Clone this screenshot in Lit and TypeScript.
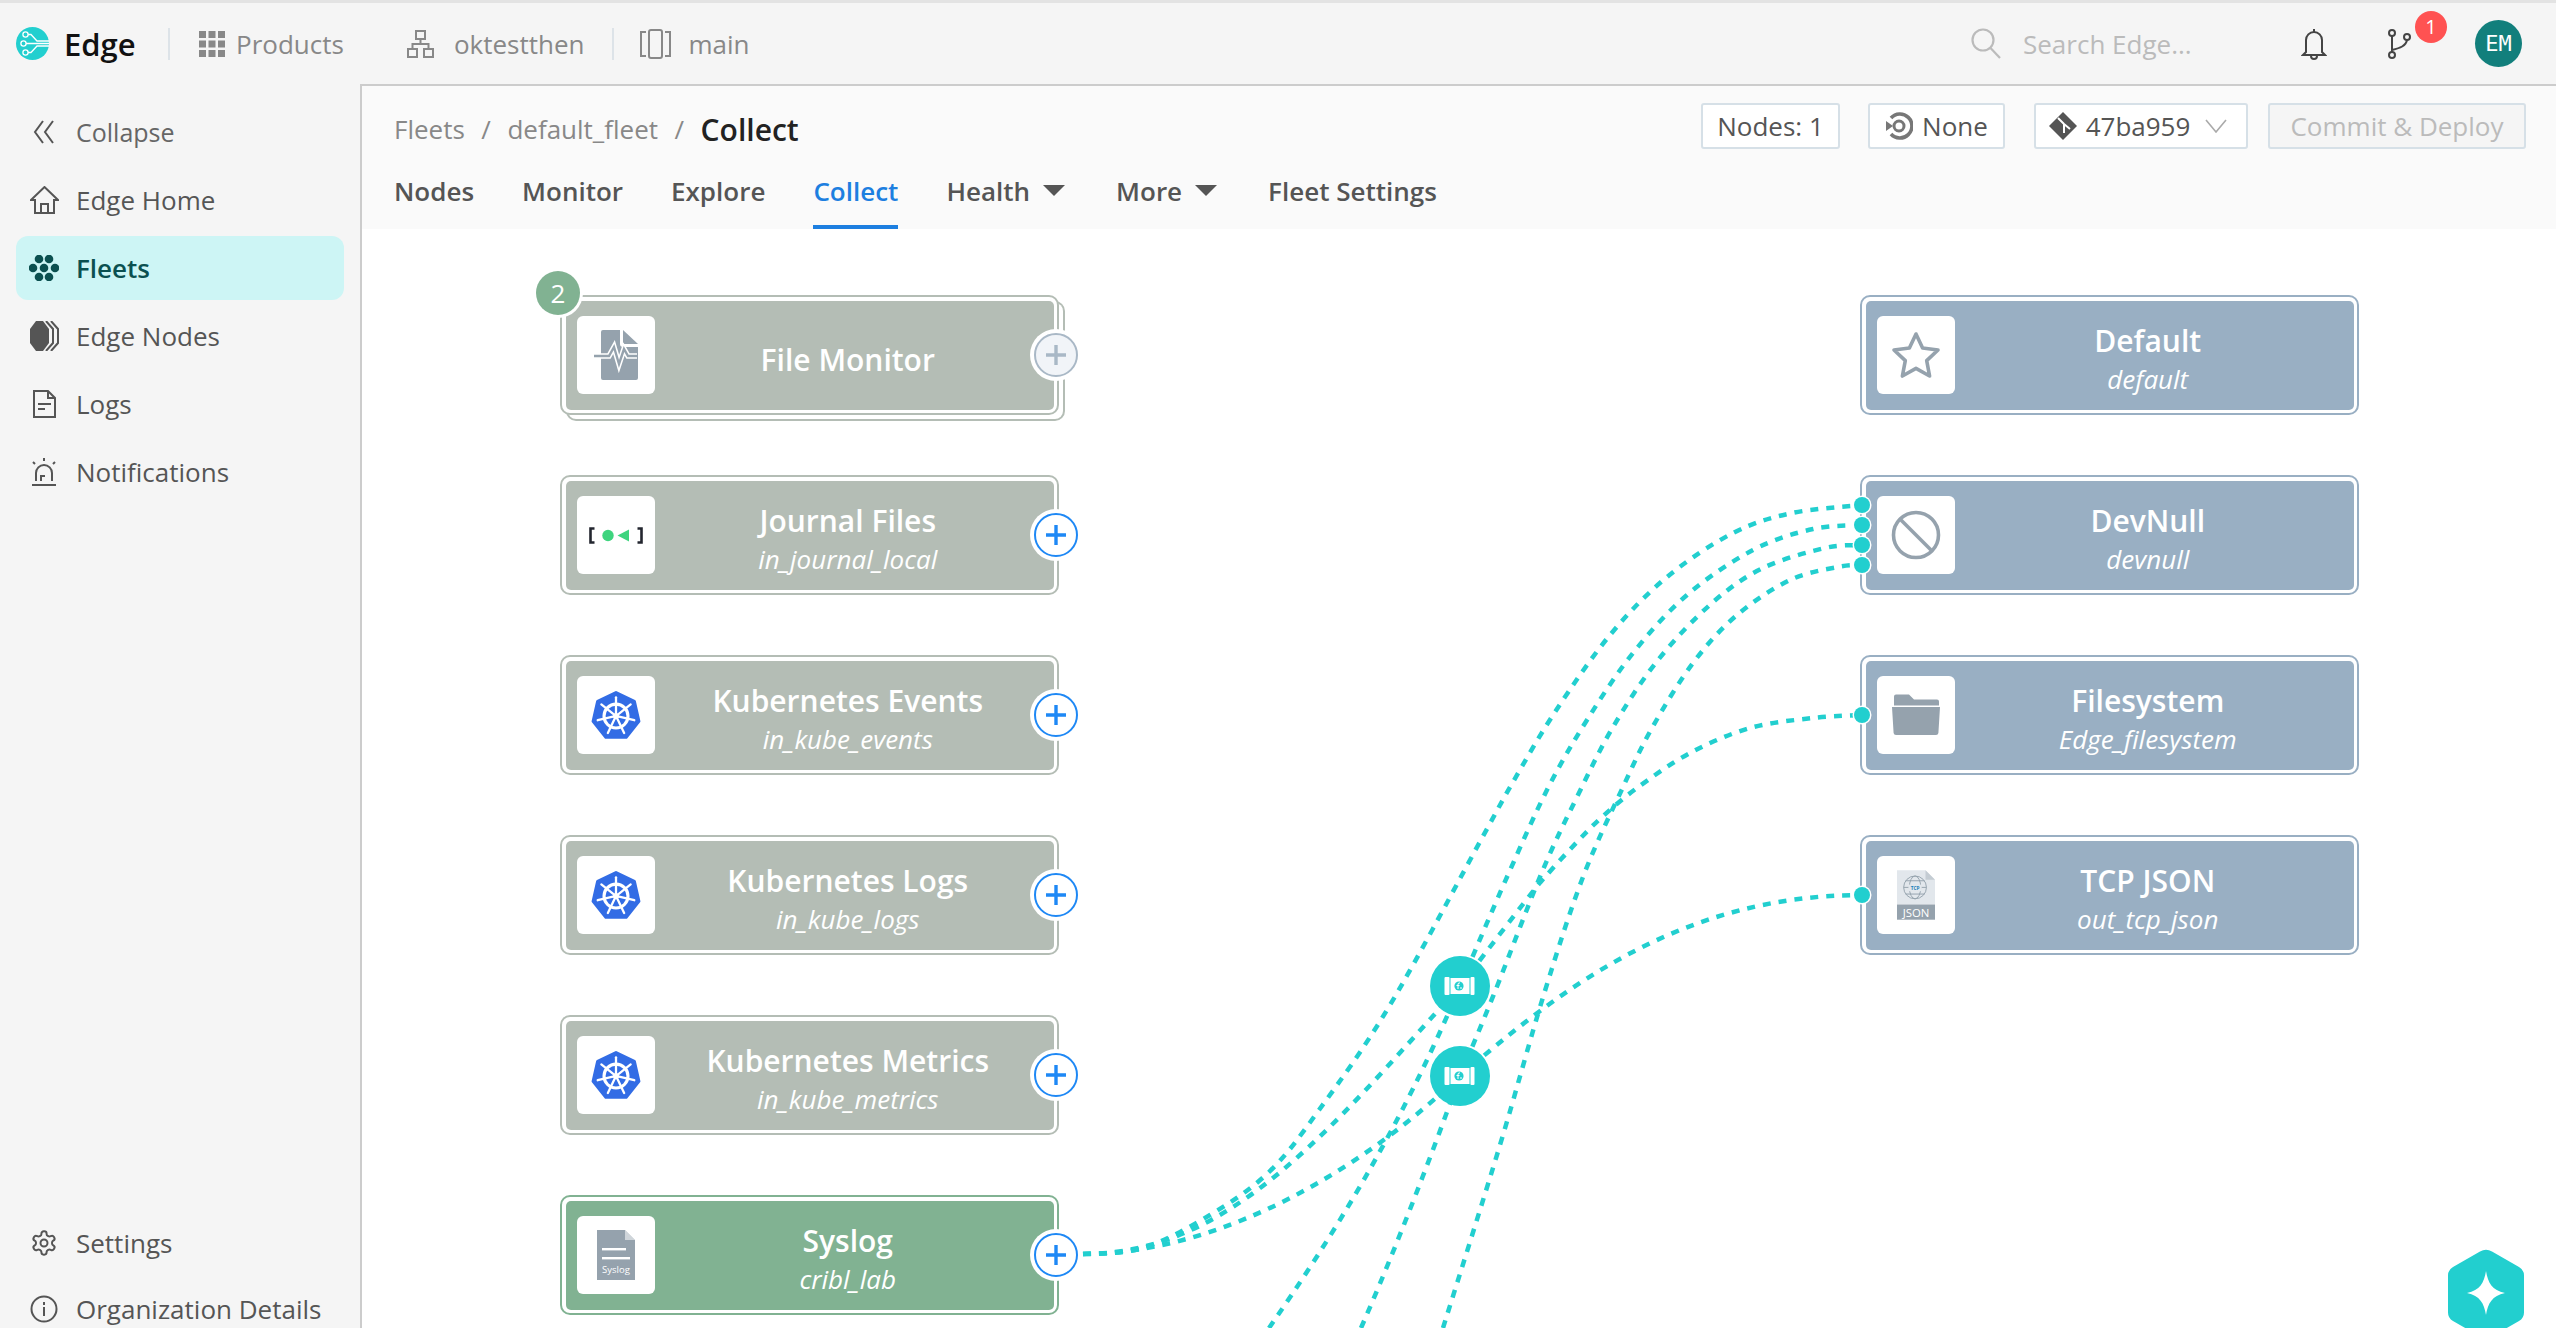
import { LitElement, html, css, svg } from "lit";
import { customElement } from "lit/decorators.js";

const GREY = "#b4bdb5";
const GREEN = "#81b292";
const BLUE = "#99afc3";
const ICON = "#95a2ad";

const heptagon = Array.from({ length: 7 }, (_, i) => {
  const a = -Math.PI / 2 + (i * 2 * Math.PI) / 7;
  return `${(24 + 22.5 * Math.cos(a)).toFixed(2)},${(25 + 22.5 * Math.sin(a)).toFixed(2)}`;
}).join(" ");
const spokes = Array.from({ length: 7 }, (_, i) => {
  const a = -Math.PI / 2 + (i * 2 * Math.PI) / 7;
  const c = Math.cos(a), s = Math.sin(a);
  return svg`<line x1=${24 + 3 * c} y1=${25 + 3 * s} x2=${24 + 18 * c} y2=${25 + 18 * s} stroke="#fff" stroke-width="2.2" stroke-linecap="round"/>`;
});
const kube = html`<svg width="50" height="50" viewBox="0 0 48 48">
  <polygon points=${heptagon} fill="#326ce5" stroke="#326ce5" stroke-width="3" stroke-linejoin="round"/>
  <circle cx="24" cy="25" r="11.5" fill="none" stroke="#fff" stroke-width="3"/>
  ${spokes}<circle cx="24" cy="25" r="3" fill="#fff"/></svg>`;

const fileMonitor = html`<svg width="44" height="50" viewBox="0 0 44 50">
  <path d="M7 2a2 2 0 0 1 2-2h17v14a3 3 0 0 0 3 3h15v31a2 2 0 0 1-2 2H9a2 2 0 0 1-2-2z" fill=${ICON}/>
  <path d="M29 0l15 14H29z" fill=${ICON}/>
  <path d="M0 26h15l5-9 5 17 5-15 4 7h9" fill="none" stroke="#fff" stroke-width="5.5"/>
  <path d="M0 26h15l5-9 5 17 5-15 4 7h9" fill="none" stroke=${ICON} stroke-width="2.4"/></svg>`;

const journal = html`<svg width="54" height="17" viewBox="0 0 54 17">
  <path d="M5.500 1.500H1.500v14h4M48.500 1.500h4v14h-4" fill="none" stroke="#23262f" stroke-width="2.6"/>
  <circle cx="19" cy="8.500" r="5.700" fill="#3ed47e"/><path d="M40 2.500v12L28.500 8.500z" fill="#3ed47e"/></svg>`;

const syslog = html`<svg width="38" height="50" viewBox="0 0 38 50">
  <path d="M0 0h28l10 10v40H0z" fill=${ICON}/><path d="M28 0l10 10H28z" fill="#fff" opacity=".55"/>
  <rect x="5" y="18" width="24" height="2.4" fill="#fff"/><rect x="5" y="27" width="28" height="2.4" fill="#fff"/>
  <text x="19" y="43" text-anchor="middle" font-size="9.500" fill="#fff" font-family="Open Sans, sans-serif">Syslog</text></svg>`;

const star = html`<svg width="50" height="48" viewBox="0 0 50 48">
  <path d="M25 3l6.600 14 15.400 2-11.300 10.600L38.600 45 25 37.400 11.400 45l2.900-15.400L3 19l15.400-2z" fill="none" stroke=${ICON} stroke-width="3.600" stroke-linejoin="round"/></svg>`;
const ban = html`<svg width="50" height="50" viewBox="0 0 50 50">
  <circle cx="25" cy="25" r="22.500" fill="none" stroke=${ICON} stroke-width="3.600"/><path d="M9 9l32 32" stroke=${ICON} stroke-width="3.600"/></svg>`;
const folder = html`<svg width="50" height="42" viewBox="0 0 50 42">
  <path d="M3 2.500a2 2 0 0 1 2-2h13l5 5h23a2 2 0 0 1 2 2v4H3z" fill=${ICON}/>
  <path d="M1 13h48l-1.600 26a2.400 2.400 0 0 1-2.400 2H5a2.400 2.400 0 0 1-2.400-2z" fill=${ICON}/></svg>`;
const tcp = html`<svg width="38" height="50" viewBox="0 0 40 52">
  <path d="M0 0h30l10 10v26H0z" fill="#e2e7ec"/><path d="M30 0l10 10H30z" fill="#c4ccd3"/>
  <g fill="none" stroke=${ICON} stroke-width="1"><circle cx="19" cy="18" r="12"/><ellipse cx="19" cy="18" rx="6" ry="12"/><path d="M7 18h24M9 11h20M9 25h20"/></g>
  <rect x="12" y="15" width="14" height="7" fill="#e2e7ec"/>
  <text x="19" y="21" text-anchor="middle" font-size="5" font-weight="700" fill="#1d7fb8" font-family="Open Sans, sans-serif">TCP</text>
  <rect y="36" width="40" height="16" fill=${ICON}/>
  <text x="20" y="49" text-anchor="middle" font-size="12" fill="#fff" font-family="Open Sans, sans-serif">JSON</text></svg>`;

interface Node { title: string; sub?: string; icon: unknown; x: number; y: number; color: string; out?: boolean; off?: boolean; stack?: boolean; }
const nodes: Node[] = [
  { title: "File Monitor", icon: fileMonitor, x: 560, y: 295, color: GREY, out: true, off: true, stack: true },
  { title: "Journal Files", sub: "in_journal_local", icon: journal, x: 560, y: 475, color: GREY, out: true },
  { title: "Kubernetes Events", sub: "in_kube_events", icon: kube, x: 560, y: 655, color: GREY, out: true },
  { title: "Kubernetes Logs", sub: "in_kube_logs", icon: kube, x: 560, y: 835, color: GREY, out: true },
  { title: "Kubernetes Metrics", sub: "in_kube_metrics", icon: kube, x: 560, y: 1015, color: GREY, out: true },
  { title: "Syslog", sub: "cribl_lab", icon: syslog, x: 560, y: 1195, color: GREEN, out: true },
  { title: "Default", sub: "default", icon: star, x: 1860, y: 295, color: BLUE },
  { title: "DevNull", sub: "devnull", icon: ban, x: 1860, y: 475, color: BLUE },
  { title: "Filesystem", sub: "Edge_filesystem", icon: folder, x: 1860, y: 655, color: BLUE },
  { title: "TCP JSON", sub: "out_tcp_json", icon: tcp, x: 1860, y: 835, color: BLUE },
];

const CX = 362, CY = 229;

function smooth(p: number[][]): string {
  let d = `M${p[0][0]} ${p[0][1]}`;
  for (let i = 0; i < p.length - 1; i++) {
    const a = p[Math.max(i - 1, 0)], b = p[i], c = p[i + 1], e = p[Math.min(i + 2, p.length - 1)];
    d += ` C${b[0] + (c[0] - a[0]) / 6} ${b[1] + (c[1] - a[1]) / 6} ${c[0] - (e[0] - b[0]) / 6} ${c[1] - (e[1] - b[1]) / 6} ${c[0]} ${c[1]}`;
  }
  return d;
}

const edges = [
  smooth([[1083, 1254], [1143, 1248], [1210, 1215], [1269, 1172], [1319, 1110], [1390, 1005], [1482, 838], [1513, 782], [1555, 712], [1610, 635], [1667, 577], [1733, 533], [1792, 513], [1862, 505]]),
  "M1083 1254 C1230 1254 1330 1130 1460 986",
  "M1083 1254 C1200 1254 1340 1190 1460 1076",
  "M1269 1328 C1330 1240 1400 1130 1460 986",
  "M1361 1328 C1395 1250 1430 1160 1460 1076",
  smooth([[1460, 986], [1507, 877], [1548, 788], [1587, 720], [1633, 653], [1687, 595], [1753, 550], [1813, 529], [1862, 525]]),
  smooth([[1460, 986], [1527, 899], [1545, 877], [1577, 842], [1602, 817], [1637, 788], [1690, 753], [1750, 728], [1813, 718], [1862, 715]]),
  smooth([[1460, 1076], [1494, 994], [1542, 872], [1577, 797], [1613, 727], [1658, 660], [1712, 603], [1763, 568], [1825, 548], [1862, 545]]),
  "M1460 1076 C1560 990 1680 895 1862 895",
  smooth([[1443, 1328], [1500, 1145], [1544, 994], [1583, 877], [1623, 787], [1652, 728], [1693, 663], [1737, 615], [1790, 580], [1838, 567], [1862, 565]]),
];
const dots = [505, 525, 545, 565, 715, 895];
const pipes = [986, 1076];

@customElement("app-root")
export class AppRoot extends LitElement {
  static styles = css`
    :host { display: flex; flex-direction: column; width: 100vw; height: 100vh; overflow: hidden; font-family: "Open Sans", sans-serif; color: #555; background: #f5f5f5; }
    svg { display: block; flex: none; }

    .top { height: 84px; box-sizing: border-box; border-top: 3px solid #e3e3e3; display: flex; align-items: center; flex: none; font-size: 26px; color: #888; }
    .logo { margin-left: 16px; }
    .brand { margin-left: 15px; font-size: 31px; font-weight: 600; color: #111; width: 71px; }
    .sep { width: 2px; height: 32px; background: #dde3e8; }
    .top .products { margin-left: 29px; }
    .top .pl { margin-left: 11px; }
    .spacer { flex: 1; }
    .search { color: #bbb; margin-left: 22px; width: 170px; white-space: nowrap; }

    .avatar { width: 47px; height: 47px; border-radius: 50%; background: #127f7c; color: #fff; display: flex; align-items: center; justify-content: center; font: 22px "DejaVu Sans Mono", monospace; margin: 0 34px 0 0; }
    .branch { position: relative; }
    .badge { position: absolute; left: 28px; top: -18px; width: 32px; height: 32px; border-radius: 50%; background: #ff5252; color: #fff; font-size: 20px; display: flex; align-items: center; justify-content: center; }

    .body { flex: 1; display: flex; min-height: 0; }
    .side { width: 362px; box-sizing: border-box; border-right: 2px solid #ccc; padding-top: 14px; display: flex; flex-direction: column; flex: none; overflow: hidden; }
    .item { height: 64px; margin: 2px 16px; padding-left: 12px; display: flex; align-items: center; gap: 16px; font-size: 26px; color: #555; border-radius: 12px; white-space: nowrap; flex: none; }
    .item .ic { width: 32px; display: flex; justify-content: center; flex: none; }
    .item.collapse { color: #666; font-size: 25px; }
    .item.active { background: #cdf5f5; color: #0b5050; font-weight: 600; }
    .grow { flex: 1; }
    .bottom { margin-bottom: -15px; flex: none; }

    .main { flex: 1; min-width: 0; display: flex; flex-direction: column; border-top: 2px solid #ccc; background: #fafafa; }
    .sub { height: 67px; box-sizing: border-box; padding: 17px 30px 0 32px; display: flex; justify-content: space-between; align-items: flex-start; flex: none; }
    .crumbs { display: flex; align-items: center; height: 52px; font-size: 26px; color: #888; white-space: nowrap; }
    .crumbs .s { margin: 0 16.500px; }
    .crumbs b { font-size: 30px; font-weight: 600; color: #222; }
    .btns { display: flex; }
    .btn { height: 46px; box-sizing: border-box; background: #fff; border: 2px solid #d6e0e7; border-radius: 3px; display: flex; align-items: center; justify-content: center; gap: 9px; font-size: 26px; color: #555; white-space: nowrap; }
    .btn.commit { padding-right: 6px; }
    .btn.disabled { background: #f5f5f5; color: #bbb; }
    .tabs { height: 76px; padding-left: 32px; display: flex; gap: 48px; font-size: 26px; font-weight: 600; color: #555; flex: none; box-sizing: border-box; }
    .tab { display: flex; align-items: center; gap: 13px; box-sizing: border-box; padding-top: 3px; border-bottom: 4px solid transparent; white-space: nowrap; }
    .tab.active { color: #1d7fe0; border-bottom-color: #1d7fe0; }
    .tab.drop { margin-right: 3px; }

    .canvas { flex: 1; position: relative; overflow: hidden; background: #fff; }
    .edges { position: absolute; left: 0; top: 0; }
    .node { position: absolute; width: 499px; height: 120px; box-sizing: border-box; border: 2px solid; border-radius: 10px; padding: 3.500px; background: #fff; }
    .node.stack { box-shadow: 6px 6px 0 -2px #fff, 6px 6px 0 0 #b4bdb5; }
    .fill { height: 100%; border-radius: 5px; display: flex; align-items: center; padding-left: 11.500px; color: #fff; }
    .tile { width: 78px; height: 78px; background: #fff; border-radius: 6px; display: flex; align-items: center; justify-content: center; flex: none; }
    .text { flex: 1; text-align: center; padding: 10px 13px 0 0; white-space: nowrap; }
    .title { font-size: 30px; font-weight: 600; line-height: 38px; }
    .subt { font-size: 26px; font-style: italic; line-height: 38px; }
    .plus { position: absolute; right: -21px; top: 36px; width: 44px; height: 44px; box-sizing: border-box; border: 2px solid #1e88f5; border-radius: 50%; background: #fff; box-shadow: 0 0 0 4px #fff; display: flex; align-items: center; justify-content: center; }
    .plus.off { background: #f1f4f8; border-color: #a9b8c6; }
    .count { position: absolute; left: -26px; top: -26px; width: 44px; height: 44px; border-radius: 50%; background: #81b292; color: #fff; font-size: 26px; display: flex; align-items: center; justify-content: center; box-shadow: 0 0 0 3px #fff; }
    .assist { position: absolute; right: 31px; bottom: -12px; }
  `;

  private node(n: Node) {
    const stroke = n.off ? "#a9b8c6" : "#1e88f5";
    return html`<div class="node ${n.stack ? "stack" : ""}" style="left:${n.x - CX}px;top:${n.y - CY}px;border-color:${n.color}">
      <div class="fill" style="background:${n.color}">
        <div class="tile">${n.icon}</div>
        <div class="text"><div class="title">${n.title}</div>${n.sub ? html`<div class="subt">${n.sub}</div>` : ""}</div>
      </div>
      ${n.out ? html`<div class="plus ${n.off ? "off" : ""}"><svg width="24" height="24" viewBox="0 0 24 24"><path d="M12 2v20M2 12h20" stroke=${stroke} stroke-width="3.400"/></svg></div>` : ""}
      ${n.stack ? html`<div class="count">2</div>` : ""}
    </div>`;
  }

  render() {
    return html`
      <div class="top">
        <svg class="logo" width="33" height="33" viewBox="0 0 33 33"><circle cx="16.500" cy="16.500" r="16.500" fill="#22cfcf"/>
          <g fill="none" stroke="#fff" stroke-width="1.300"><path d="M33 14H21l-6-6.500H12M33 19H21l-6 6.500H12M33 16.500H10"/><circle cx="9.500" cy="7.500" r="2.600"/><circle cx="9.500" cy="25.500" r="2.600"/><circle cx="7.500" cy="16.500" r="2.600"/></g></svg>
        <span class="brand">Edge</span>
        <span class="sep" style="margin-left:33px"></span>
        <svg class="products" width="26" height="26" viewBox="0 0 26 26" fill="#888">${[0, 9.5, 19].map((y) => [0, 9.5, 19].map((x) => svg`<rect x=${x} y=${y} width="7" height="7"/>`))}</svg>
        <span class="pl">Products</span>
        <svg style="margin-left:63px" width="27" height="28" viewBox="0 0 27 28" fill="none" stroke="#888" stroke-width="2"><rect x="9" y="1" width="9" height="8"/><rect x="1" y="19" width="9" height="8"/><rect x="17" y="19" width="9" height="8"/><path d="M13.500 9v5M5.500 19v-5h16v5"/></svg>
        <span style="margin-left:20px">oktestthen</span>
        <span class="sep" style="margin-left:28px"></span>
        <svg style="margin-left:26px" width="31" height="30" viewBox="0 0 31 30" fill="none" stroke="#888" stroke-width="2"><rect x="9" y="1" width="13" height="28" rx="2"/><path d="M6 3H1v24h5M25 3h5v24h-5"/></svg>
        <span style="margin-left:17px">main</span>
        <span class="spacer"></span>
        <svg width="30" height="31" viewBox="0 0 30 31" fill="none" stroke="#bbb" stroke-width="2.200"><circle cx="12" cy="12" r="10.500"/><path d="M19.500 20L29 30"/></svg>
        <span class="search">Search Edge...</span>
        <svg style="margin-left:108px" width="26" height="32" viewBox="0 0 26 32" fill="none" stroke="#444" stroke-width="2"><path d="M13 1v3M5 24V12a8 8 0 0 1 16 0v12l3 3H2z"/><path d="M10 28a3 3 0 0 0 6 0"/></svg>
        <span class="branch" style="margin-left:60px"><svg width="24" height="30" viewBox="0 0 24 30" fill="none" stroke="#444" stroke-width="2"><circle cx="5" cy="4" r="3"/><circle cx="5" cy="26" r="3"/><circle cx="20" cy="8" r="3"/><path d="M5 7v16M5 21c8-2 14-4 15-10"/></svg><span class="badge">1</span></span>
        <span class="avatar" style="margin-left:64px">EM</span>
      </div>
      <div class="body">
        <div class="side">
          <div class="item collapse"><span class="ic"><svg width="22" height="24" viewBox="0 0 22 24" fill="none" stroke="#555" stroke-width="2"><path d="M10 1L2 12l8 11M20 1l-8 11 8 11"/></svg></span>Collapse</div>
          <div class="item"><span class="ic"><svg width="29" height="28" viewBox="0 0 29 28" fill="none" stroke="#555" stroke-width="2"><path d="M1 14L14.500 1 28 14h-4v13H5V14z"/><path d="M11 27v-9h7v9"/></svg></span>Edge Home</div>
          <div class="item active"><span class="ic"><svg width="30" height="26" viewBox="0 0 30 26" fill="#0b5050">${[[10, 4], [20, 4], [4, 13], [15, 13], [26, 13], [10, 22], [20, 22]].map(([x, y]) => svg`<circle cx=${x} cy=${y} r="4.300"/>`)}</svg></span>Fleets</div>
          <div class="item"><span class="ic"><svg width="31" height="30" viewBox="0 0 31 30"><path d="M7 0h7l6 8v14l-6 8H7L1 22V8z" fill="#555"/><path d="M17 0l7 8v14l-7 8M22 0l7 8v14l-7 8" fill="none" stroke="#555" stroke-width="2"/></svg></span>Edge Nodes</div>
          <div class="item"><span class="ic"><svg width="23" height="28" viewBox="0 0 23 28" fill="none" stroke="#555" stroke-width="2"><path d="M1 1h14l7 7v19H1z"/><path d="M15 1v7h7M5 14h13M5 19h7"/></svg></span>Logs</div>
          <div class="item"><span class="ic"><svg width="24" height="28" viewBox="0 0 24 28" fill="none" stroke="#555" stroke-width="2"><path d="M4 23V15a8 8 0 0 1 16 0v8M0 27h24M9 23v-5h4M12 0v3M1 4l2 2M23 4l-2 2"/></svg></span>Notifications</div>
          <div class="grow"></div>
          <div class="bottom">
            <div class="item"><span class="ic"><svg width="28" height="28" viewBox="0 0 24 24" fill="none" stroke="#555" stroke-width="1.700"><path d="M12.220 2h-.44a2 2 0 0 0-2 2v.18a2 2 0 0 1-1 1.730l-.43.25a2 2 0 0 1-2 0l-.15-.08a2 2 0 0 0-2.730.73l-.22.38a2 2 0 0 0 .73 2.730l.15.1a2 2 0 0 1 1 1.720v.51a2 2 0 0 1-1 1.740l-.15.09a2 2 0 0 0-.73 2.730l.22.38a2 2 0 0 0 2.730.73l.15-.08a2 2 0 0 1 2 0l.43.25a2 2 0 0 1 1 1.730V20a2 2 0 0 0 2 2h.44a2 2 0 0 0 2-2v-.18a2 2 0 0 1 1-1.730l.43-.25a2 2 0 0 1 2 0l.15.08a2 2 0 0 0 2.730-.73l.22-.39a2 2 0 0 0-.73-2.730l-.15-.08a2 2 0 0 1-1-1.740v-.5a2 2 0 0 1 1-1.740l.15-.09a2 2 0 0 0 .73-2.730l-.22-.38a2 2 0 0 0-2.730-.73l-.15.08a2 2 0 0 1-2 0l-.43-.25a2 2 0 0 1-1-1.730V4a2 2 0 0 0-2-2z"/><circle cx="12" cy="12" r="3"/></svg></span>Settings</div>
            <div class="item"><span class="ic"><svg width="28" height="28" viewBox="0 0 28 28" fill="none" stroke="#555" stroke-width="2"><circle cx="14" cy="14" r="12.500"/><path d="M14 12v9M14 7v3"/></svg></span>Organization Details</div>
          </div>
        </div>
        <div class="main">
          <div class="sub">
            <div class="crumbs"><span>Fleets</span><span class="s">/</span><span>default_fleet</span><span class="s">/</span><b>Collect</b></div>
            <div class="btns">
              <div class="btn" style="width:139px">Nodes: 1</div>
              <div class="btn" style="width:137px;margin-left:28px"><svg width="28" height="28" viewBox="0 0 28 28" fill="none" stroke="#777"><path d="M6 6a12 12 0 1 1 0 16" stroke-width="3.600"/><circle cx="14" cy="14" r="5" stroke-width="3"/><path d="M1 9l7 5-7 5z" fill="#777" stroke="none"/></svg>None</div>
              <div class="btn commit" style="width:214px;margin-left:29px"><svg width="28" height="28" viewBox="0 0 28 28"><path d="M14 0l14 14-14 14L0 14z" fill="#555"/><path d="M9 6l6 6M15 12v9M15 12l6 5" stroke="#fff" stroke-width="2" fill="none"/></svg>47ba959<svg style="margin-left:6px" width="22" height="14" viewBox="0 0 22 14" fill="none" stroke="#aaa" stroke-width="1.600"><path d="M1 1l10 12L21 1"/></svg></div>
              <div class="btn disabled" style="width:258px;margin-left:20px">Commit &amp; Deploy</div>
            </div>
          </div>
          <div class="tabs">
            <div class="tab">Nodes</div><div class="tab">Monitor</div><div class="tab">Explore</div><div class="tab active">Collect</div>
            <div class="tab drop">Health<svg width="22" height="11" viewBox="0 0 22 11"><path d="M0 0h22L11 11z" fill="#555"/></svg></div>
            <div class="tab drop">More<svg width="22" height="11" viewBox="0 0 22 11"><path d="M0 0h22L11 11z" fill="#555"/></svg></div>
            <div class="tab">Fleet Settings</div>
          </div>
          <div class="canvas">
            <svg class="edges" width="2194" height="1099" viewBox="${CX} ${CY} 2194 1099" fill="none" stroke="#22cfcf" stroke-width="4.500" stroke-dasharray="8 8">
              ${edges.map((d) => svg`<path d=${d}/>`)}
            </svg>
            ${nodes.map((n) => this.node(n))}
            <svg class="edges" width="2194" height="1099" viewBox="${CX} ${CY} 2194 1099">
              ${dots.map((y) => svg`<circle cx="1862" cy=${y} r="8" fill="#22cfcf" stroke="#fff" stroke-width="3" paint-order="stroke"/>`)}
              ${pipes.map((y) => svg`<g transform="translate(1460 ${y})"><circle r="30" fill="#22cfcf"/>
                <rect x="-15.500" y="-9" width="5" height="18" rx="1" fill="#fff"/><rect x="-9.500" y="-8" width="19" height="16" fill="#fff"/><rect x="10.500" y="-9" width="4" height="18" rx="1" fill="#fff"/>
                <circle cx="-1" cy="0" r="4.600" fill="#22cfcf"/><path d="M-2 3v-5a1.500 1.500 0 0 1 2-1M-3.500 -.5h3M1 3v-2" stroke="#fff" stroke-width="1" fill="none"/></g>`)}
            </svg>
            <svg class="assist" width="78" height="92" viewBox="0 0 78 92"><path d="M33 3.500a12 12 0 0 1 12 0l27 15.500a10 10 0 0 1 5 9v36a10 10 0 0 1-5 9L45 88.500a12 12 0 0 1-12 0L6 73a10 10 0 0 1-5-9V28a10 10 0 0 1 5-9z" fill="#22cfcf"/><path d="M39 23c2 12 6 19 19 22-13 3-17 10-19 22-2-12-6-19-19-22 13-3 17-10 19-22z" fill="#fff"/></svg>
          </div>
        </div>
      </div>`;
  }
}
